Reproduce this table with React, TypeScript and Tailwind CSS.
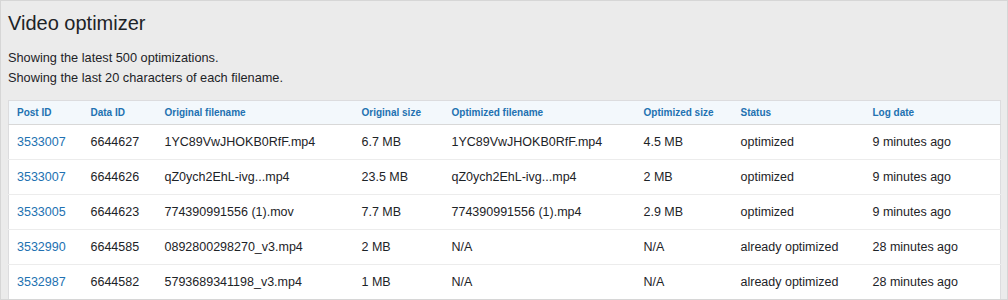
const rows = [
  { post: '3533007', data: '6644627', orig: '1YC89VwJHOKB0RfF.mp4', origSize: '6.7 MB', opt: '1YC89VwJHOKB0RfF.mp4', optSize: '4.5 MB', status: 'optimized', date: '9 minutes ago' },
  { post: '3533007', data: '6644626', orig: 'qZ0ych2EhL-ivg...mp4', origSize: '23.5 MB', opt: 'qZ0ych2EhL-ivg...mp4', optSize: '2 MB', status: 'optimized', date: '9 minutes ago' },
  { post: '3533005', data: '6644623', orig: '774390991556 (1).mov', origSize: '7.7 MB', opt: '774390991556 (1).mp4', optSize: '2.9 MB', status: 'optimized', date: '9 minutes ago' },
  { post: '3532990', data: '6644585', orig: '0892800298270_v3.mp4', origSize: '2 MB', opt: 'N/A', optSize: 'N/A', status: 'already optimized', date: '28 minutes ago' },
  { post: '3532987', data: '6644582', orig: '5793689341198_v3.mp4', origSize: '1 MB', opt: 'N/A', optSize: 'N/A', status: 'already optimized', date: '28 minutes ago' },
]

const headers = [
  'Post ID',
  'Data ID',
  'Original filename',
  'Original size',
  'Optimized filename',
  'Optimized size',
  'Status',
  'Log date',
]

const widths = ['w-[74px]', 'w-[74px]', 'w-[197px]', 'w-[90px]', 'w-[192px]', 'w-[97px]', 'w-[132px]', 'w-[136px]']

const App = () => {
  return (
    <div className="h-[300px] overflow-hidden bg-[#ebebeb] border border-[#d6d6d6] font-['Liberation_Sans',Arial,sans-serif] text-[#1d2327]">
      <div className="px-[7px]">
        <h1 className="text-[20px] leading-[24px] pt-[10px] mb-[13px]">Video optimizer</h1>
        <p className="text-[12.75px] leading-[20px]">Showing the latest 500 optimizations.</p>
        <p className="text-[12.75px] leading-[20px]">Showing the last 20 characters of each filename.</p>

        {/* Log table */}
        <table className="mt-[12px] w-[992px] table-fixed border border-[#dcdcde] bg-white text-[12.5px]">
          <colgroup>
            {widths.map((w, i) => (
              <col key={i} className={w} />
            ))}
          </colgroup>
          <thead className="bg-[#f3f8fc]">
            <tr className="border-b border-[#d8d8d8]">
              {headers.map((h) => (
                <th
                  key={h}
                  className="h-[24px] px-[8px] text-left text-[10px] font-bold text-[#2271b1]"
                >
                  {h}
                </th>
              ))}
            </tr>
          </thead>
          <tbody>
            {rows.map((r, i) => (
              <tr key={i} className="border-b border-[#ececec] h-[35px]">
                <td className="px-[8px] text-[#2271b1]">{r.post}</td>
                <td className="px-[8px]">{r.data}</td>
                <td className="px-[8px] whitespace-nowrap">{r.orig}</td>
                <td className="px-[8px]">{r.origSize}</td>
                <td className="px-[8px] whitespace-nowrap">{r.opt}</td>
                <td className="px-[8px]">{r.optSize}</td>
                <td className="px-[8px]">{r.status}</td>
                <td className="px-[8px]">{r.date}</td>
              </tr>
            ))}
          </tbody>
        </table>
      </div>
    </div>
  )
}

export default App
